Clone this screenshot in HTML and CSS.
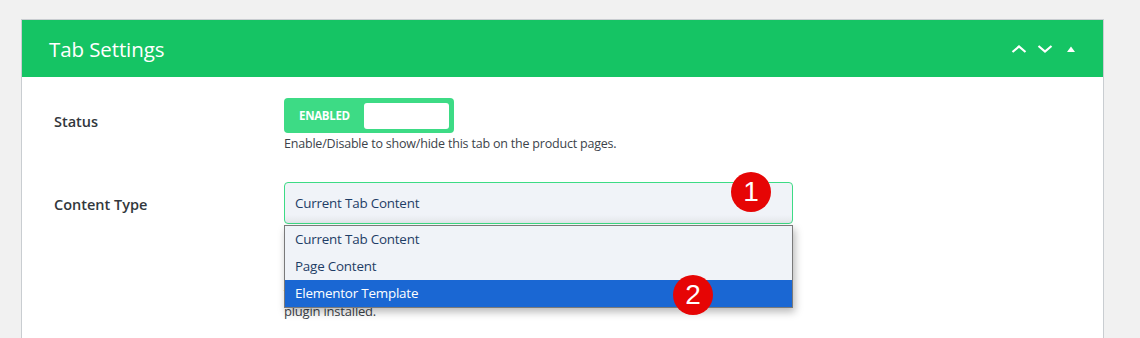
FILE: index.html
```html
<!DOCTYPE html>
<html lang="en">
<head>
<meta charset="utf-8">
<title>Tab Settings</title>
<link rel="stylesheet" href="styles.css">
</head>
<body>
<div class="card">
  <div class="card-header">
    <h2 class="card-title">Tab Settings</h2>
    <div class="header-actions">
      <svg class="hicon" width="16" height="8" viewBox="0 0 16 8"><path d="M1.5 7 L8 1.5 L14.5 7" fill="none" stroke="#fff" stroke-width="2.2"/></svg>
      <svg class="hicon" width="16" height="8" viewBox="0 0 16 8"><path d="M1.5 1 L8 6.5 L14.5 1" fill="none" stroke="#fff" stroke-width="2.2"/></svg>
      <svg class="hicon tri" width="8" height="6" viewBox="0 0 8 6"><path d="M0 6 L4 0.5 L8 6 Z" fill="#fff"/></svg>
    </div>
  </div>
  <div class="card-body">
    <div class="row row-status">
      <div class="label">Status</div>
      <div class="field">
        <div class="toggle">
          <span class="toggle-text">ENABLED</span>
          <span class="toggle-knob"></span>
        </div>
        <p class="help">Enable/Disable to show/hide this tab on the product pages.</p>
      </div>
    </div>
    <div class="row row-content">
      <div class="label">Content Type</div>
      <div class="field field-select">
        <div class="select">Current Tab Content</div>
        <p class="help help-long">The Elementor Template option requires the Elementor<br>plugin installed.</p>
        <ul class="dropdown">
          <li class="opt">Current Tab Content</li>
          <li class="opt">Page Content</li>
          <li class="opt opt-active">Elementor Template</li>
        </ul>
        <span class="badge badge-1">1</span>
        <span class="badge badge-2">2</span>
      </div>
    </div>
  </div>
</div>
</body>
</html>
```

FILE: styles.css
```css
html, body {
  margin: 0;
  padding: 0;
}
body {
  background: #f1f1f1;
  font-family: "Open Sans", "Noto Sans", sans-serif;
  padding: 19px 36px 0 21px;
  height: 338px;
  box-sizing: border-box;
  overflow: hidden;
}
.card {
  background: #fff;
  border: 1px solid #c9cdd1;
  border-bottom: none;
  height: 320px;
}
.card-header {
  background: #15c464;
  height: 57px;
  display: flex;
  align-items: center;
  justify-content: space-between;
  padding: 0 28px 0 27px;
}
.card-title {
  margin: 0;
  color: #fff;
  font-weight: 400;
  font-size: 20.5px;
  letter-spacing: -0.1px;
}
.header-actions {
  display: flex;
  align-items: center;
  gap: 10px;
}
.hicon { display: block; }
.tri { margin-left: 4px; }
.card-body {
  padding: 21px 32px 0 32px;
}
.row {
  display: grid;
  grid-template-columns: 230px 509px;
}
.label {
  font-size: 14.5px;
  font-weight: 600;
  color: #32373c;
}
.row-status .label { padding-top: 14px; }
.row-content { margin-top: 30px; }
.row-content .label { padding-top: 13px; }
.toggle {
  width: 170px;
  height: 35px;
  box-sizing: border-box;
  background: #3ddb85;
  border-radius: 4px;
  display: flex;
  align-items: center;
  padding: 0 5px 0 15px;
}
.toggle-text {
  color: #fff;
  font-size: 11.5px;
  font-weight: 700;
  letter-spacing: -0.3px;
  width: 65px;
}
.toggle-knob {
  width: 85px;
  height: 26px;
  background: #fff;
  border-radius: 3px;
}
.help {
  margin: 2px 0 0 0;
  font-size: 12.5px;
  line-height: 17px;
  color: #3c434a;
  letter-spacing: -0.2px;
}
.field-select { position: relative; }
.select {
  height: 42px;
  box-sizing: border-box;
  border: 1px solid #3ddb85;
  border-radius: 4px;
  background: linear-gradient(#f0f3f8 80%, #e3e6ea);
  color: #1e3d66;
  font-size: 13.4px;
  letter-spacing: -0.2px;
  display: flex;
  align-items: center;
  padding-left: 10px;
}
.help-long {
  margin-top: 62px;
  font-size: 13px;
}
.dropdown {
  position: absolute;
  left: 0;
  top: 43px;
  width: 509px;
  margin: 0;
  padding: 0;
  list-style: none;
  box-sizing: border-box;
  border: 1px solid #7a7a7a;
  background: #f0f3f8;
  box-shadow: 2px 4px 8px rgba(0,0,0,0.28);
}
.opt {
  height: 27px;
  line-height: 27px;
  padding-left: 10px;
  color: #1e3d66;
  font-size: 13.4px;
  letter-spacing: -0.2px;
}
.opt-active {
  background: #1a67d3;
  color: #fff;
}
.badge {
  position: absolute;
  width: 40px;
  height: 40px;
  border-radius: 50%;
  background: #e60505;
  color: #fff;
  font-family: "Liberation Sans", Arial, sans-serif;
  font-size: 28px;
  line-height: 40px;
  text-align: center;
}
.badge-1 { left: 447px; top: -10px; }
.badge-2 { left: 389px; top: 93px; }
```
